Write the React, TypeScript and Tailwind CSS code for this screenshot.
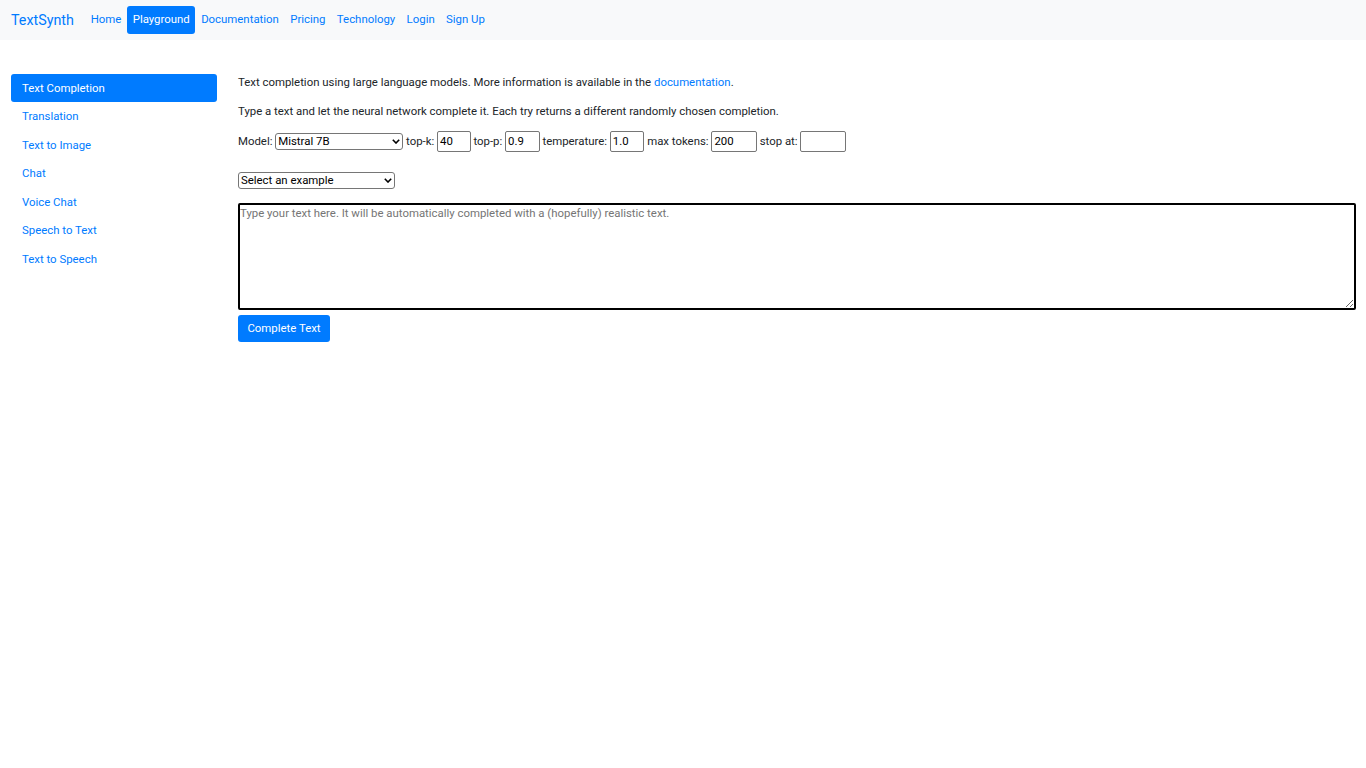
const font = "[font-family:Roboto,'Liberation_Sans',sans-serif]";

const navLinks = ["Home", "Playground", "Documentation", "Pricing", "Technology", "Login", "Sign Up"];
const sideLinks = ["Text Completion", "Translation", "Text to Image", "Chat", "Voice Chat", "Speech to Text", "Text to Speech"];

function NavBar() {
  return (
    <nav className="flex h-10 items-center bg-[#f8f9fa] pl-[11px]">
      <a href="#" className="mr-[11px] w-[63px] text-[14.3px] leading-[22px] text-[#007bff]">
        TextSynth
      </a>
      <ul className="flex">
        {navLinks.map((l) => (
          <li key={l}>
            <a
              href="#"
              className={
                l === "Playground"
                  ? "block rounded-[3px] bg-[#007bff] px-[5.7px] pb-[6px] pt-[4px] leading-[18px] text-white"
                  : "block px-[5.7px] pb-[6px] pt-[4px] leading-[18px] text-[#007bff]"
              }
            >
              {l}
            </a>
          </li>
        ))}
      </ul>
    </nav>
  );
}

function Sidebar() {
  return (
    <ul className="w-[206px] shrink-0">
      {sideLinks.map((l, i) => (
        <li key={l} className="h-[28.5px]">
          <a
            href="#"
            className={
              i === 0
                ? "block h-[28px] rounded-[3px] bg-[#007bff] px-[11px] pt-[4.5px] leading-[18px] text-white"
                : "block h-[28px] px-[11px] pt-[4.5px] leading-[18px] text-[#007bff]"
            }
          >
            {l}
          </a>
        </li>
      ))}
    </ul>
  );
}

function Select({ label, width }: { label: string; width: string }) {
  return (
    <span className={`relative block h-[17px] ${width}`}>
      <select className="block h-[17px] w-full appearance-none rounded-[3px] border border-[#767676] bg-white pl-[2px] text-[11.4px] leading-[15px] text-black outline-none">
        <option>{label}</option>
      </select>
      <svg
        viewBox="0 0 8 5"
        className="pointer-events-none absolute right-[3px] top-[6px] h-[5px] w-[8px]"
        fill="none"
        stroke="#000"
        strokeWidth="1.6"
      >
        <path d="M.8.8 4 4 7.2.8" />
      </svg>
    </span>
  );
}

const inputCls = "h-[21px] rounded-[2px] border border-[#767676] bg-white px-[2px] pb-[2px] text-[11.4px] text-black outline-none";

function Main() {
  return (
    <div className="ml-[21px] min-w-0 flex-1 pr-[10px] text-[#212529]">
      <p className="mb-[12.5px] leading-[16px]">
        Text completion using large language models. More information is available in the{" "}
        <a href="#" className="text-[#007bff]">documentation</a>.
      </p>
      <p className="mb-[12.5px] leading-[16px]">
        Type a text and let the neural network complete it. Each try returns a different randomly chosen completion.
      </p>
      <div className="flex h-[21px] items-center">
        <span>Model:&nbsp;</span>
        <Select label="Mistral 7B" width="w-[128px]" />
        <span>&nbsp;top-k:&nbsp;</span>
        <input className={`${inputCls} w-[33.5px]`} defaultValue="40" />
        <span>&nbsp;top-p:&nbsp;</span>
        <input className={`${inputCls} w-[34.5px]`} defaultValue="0.9" />
        <span>&nbsp;temperature:&nbsp;</span>
        <input className={`${inputCls} w-[34.5px]`} defaultValue="1.0" />
        <span>&nbsp;max tokens:&nbsp;</span>
        <input className={`${inputCls} w-[45.5px]`} defaultValue="200" />
        <span>&nbsp;stop at:&nbsp;</span>
        <input className={`${inputCls} w-[45.5px]`} />
      </div>
      <div className="mt-[20px]">
        <Select label="Select an example" width="w-[157px]" />
      </div>
      <textarea
        className="mt-[14px] block h-[107px] w-full resize-y rounded-[2px] border-2 border-black bg-white p-0 text-[11.4px] leading-[17px] text-black outline-none placeholder:text-[#757575]"
        placeholder="Type your text here. It will be automatically completed with a (hopefully) realistic text."
      />
      <button className="mt-[5px] block h-[27px] w-[92px] rounded-[3px] bg-[#007bff] text-[11.4px] text-white">
        Complete Text
      </button>
    </div>
  );
}

export default function App() {
  return (
    <div className={`${font} min-h-screen bg-white text-[11.4px]`}>
      <NavBar />
      <div className="flex pl-[11px] pt-[34px]">
        <Sidebar />
        <Main />
      </div>
    </div>
  );
}
